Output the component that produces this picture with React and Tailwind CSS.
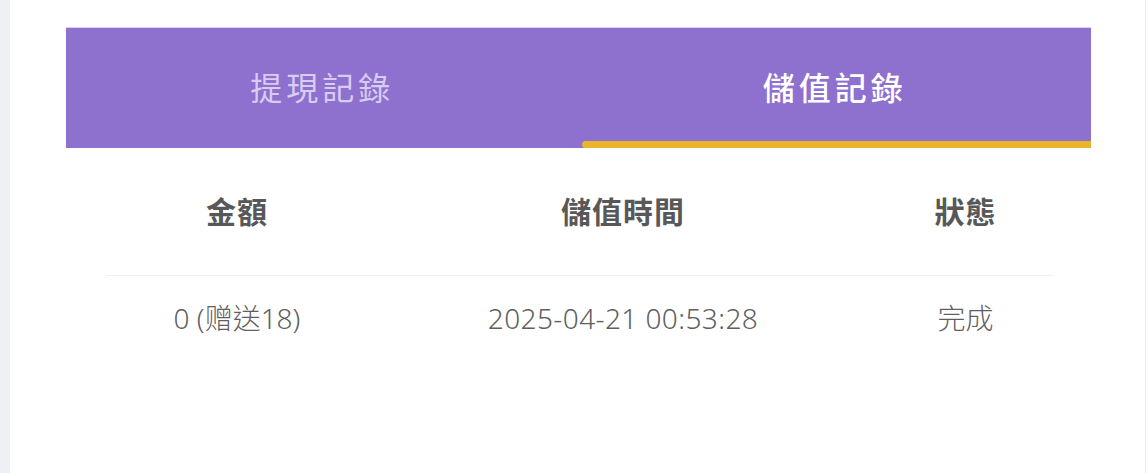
export default function App() {
  const font = {
    fontFamily: '"Noto Sans", "Noto Sans CJK TC", sans-serif',
  }

  return (
    <div className="flex h-[473px] w-[1148px] overflow-hidden bg-white" style={font}>
      <div className="w-[10px] shrink-0 bg-[#eef0f6]" />
      <div className="flex-1 border-r border-[#ececf0] pl-[56px] pr-[54px] pt-[27px]">
        <div className="border-t border-[#d9cdf0]">
          <div className="flex h-[120px] bg-[#8e70ce]">
            <div className="flex flex-1 items-center justify-center">
              <span className="text-[32px] tracking-[4px] text-[#d8ccf2]">提現記錄</span>
            </div>
            <div className="relative flex flex-1 items-center justify-center">
              <span className="text-[32px] font-medium tracking-[4px] text-white">儲值記錄</span>
              <div className="absolute bottom-0 left-[3px] right-0 h-[7px] rounded-l-full bg-[#e9b52b]" />
            </div>
          </div>
        </div>

        <div className="pl-[40px] pr-[38px]">
          <div className="grid h-[128px] grid-cols-[262px_510px_1fr] items-center border-b border-[#f0f0f0] text-[30px] font-bold text-[#585858]">
            <div className="text-center tracking-[1px]">金額</div>
            <div className="text-center tracking-[1px]">儲值時間</div>
            <div className="text-center tracking-[1px]">狀態</div>
          </div>
          <div className="grid h-[84px] grid-cols-[262px_510px_1fr] items-center text-[28px] font-light text-[#5f5f5f]">
            <div className="text-center">0 (赠送18)</div>
            <div className="text-center tracking-[0.4px]">2025-04-21 00:53:28</div>
            <div className="text-center">完成</div>
          </div>
        </div>
      </div>
      <div className="w-[2px] shrink-0 bg-white" />
    </div>
  )
}
